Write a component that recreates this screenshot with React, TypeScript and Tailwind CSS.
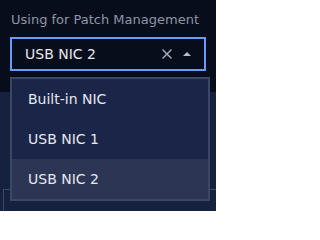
import { X } from 'lucide-react';

const options = ['Built-in NIC', 'USB NIC 1', 'USB NIC 2'];

export default function App() {
  const selected = 'USB NIC 2';

  return (
    <div className="relative w-[216px] h-[211px] overflow-hidden bg-[#16213f] font-['DejaVu_Sans',sans-serif]">
      {/* Header area */}
      <div className="h-[92px] bg-[#080d1c] px-[10px] pt-[11px]">
        <div className="pl-[1px] text-[13px] leading-[17px] text-[#8d95a8]">Using for Patch Management</div>
        <div className="mt-[9px] flex h-[34px] items-center border-2 border-[#6b9cf2] pl-[13px] pr-[13px]">
          <span className="flex-1 text-[14px] leading-[18px] text-[#e6e8ee]">{selected}</span>
          <X className="h-[16px] w-[16px] text-[#a8aec0]" strokeWidth={2} />
          <svg className="ml-[8px]" width="8" height="4" viewBox="0 0 8 4">
            <path d="M0 4 L4 0 L8 4 Z" fill="#b8bdcc" />
          </svg>
        </div>
      </div>

      {/* Card below */}
      <div className="ml-[3px] mt-[97px] h-[40px] border-l border-t border-[#3b4767]" />

      {/* Dropdown menu */}
      <div className="absolute left-[10px] top-[77px] w-[200px] border-2 border-[#3b4767] bg-[#1a2547]">
        {options.map((opt) => (
          <div
            key={opt}
            className={`flex h-[40px] items-center pl-[16px] text-[14px] text-[#e6e8ee] ${
              opt === selected ? 'bg-[#2c3654]' : ''
            }`}
          >
            {opt}
          </div>
        ))}
      </div>
    </div>
  );
}
